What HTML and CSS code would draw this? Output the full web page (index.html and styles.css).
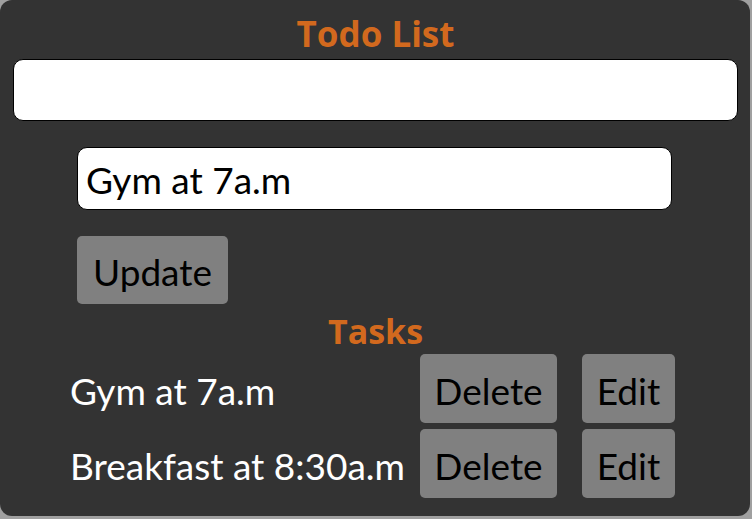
FILE: index.html
```html
<!DOCTYPE html>
<html lang="en">
<head>
<meta charset="utf-8">
<title>Todo List</title>
<link rel="stylesheet" href="styles.css">
</head>
<body>
<div class="app">
  <h1 class="app-title">Todo List</h1>
  <input class="field field-main" type="text" value="">
  <div class="editor">
    <input class="field field-edit" type="text" value="Gym at 7a.m">
    <button class="btn btn-update">Update</button>
  </div>
  <h2 class="section-title">Tasks</h2>
  <div class="tasks">
    <span class="task-text">Gym at 7a.m</span>
    <button class="btn btn-delete">Delete</button>
    <button class="btn btn-edit">Edit</button>
    <span class="task-text">Breakfast at 8:30a.m</span>
    <button class="btn btn-delete">Delete</button>
    <button class="btn btn-edit">Edit</button>
  </div>
</div>
</body>
</html>
```
FILE: styles.css
```css
html, body {
  margin: 0;
  padding: 0;
}
body {
  background: #a0a0a0;
  width: 752px;
  height: 519px;
  overflow: hidden;
  font-family: Lato, "Open Sans", sans-serif;
}
.app {
  box-sizing: border-box;
  width: 750px;
  height: 516px;
  background: #333333;
  border-radius: 12px;
  padding: 14px 12px 0 13px;
  display: flex;
  flex-direction: column;
}
.app > * {
  flex-shrink: 0;
}
.app-title,
.section-title {
  margin: 0;
  text-align: center;
  color: #d2691e;
  font-family: "Open Sans", sans-serif;
  font-weight: 700;
  line-height: 40px;
}
.app-title {
  font-size: 35px;
  margin-bottom: 5px;
}
.section-title {
  font-size: 34px;
  margin-top: 7px;
}
.field {
  box-sizing: border-box;
  background: #ffffff;
  border: 1px solid #000000;
  border-radius: 10px;
  font-family: Lato, sans-serif;
  font-size: 37px;
  color: #000000;
  padding: 0 8px;
  outline: none;
  margin: 0;
}
.field-main {
  width: 725px;
  height: 62px;
}
.editor {
  display: flex;
  flex-direction: column;
  align-items: flex-start;
  width: 595px;
  margin: 26px 0 0 64px;
  gap: 26px;
}
.field-edit {
  width: 595px;
  height: 63px;
  padding-top: 2px;
}
.btn {
  box-sizing: border-box;
  background: #808080;
  border: none;
  border-radius: 5px;
  color: #000000;
  font-family: Lato, sans-serif;
  font-size: 37px;
  padding: 3px 0 0;
  margin: 0;
  text-align: center;
}
.btn-update {
  width: 151px;
  height: 68px;
}
.tasks {
  display: grid;
  grid-template-columns: 325px 137px 93px;
  column-gap: 25px;
  row-gap: 6px;
  margin: 3px 0 0 57px;
  align-items: center;
}
.task-text {
  color: #ffffff;
  font-size: 37px;
  padding-top: 4px;
  white-space: nowrap;
}
.btn-delete {
  width: 137px;
  height: 69px;
}
.btn-edit {
  width: 93px;
  height: 69px;
}
```
